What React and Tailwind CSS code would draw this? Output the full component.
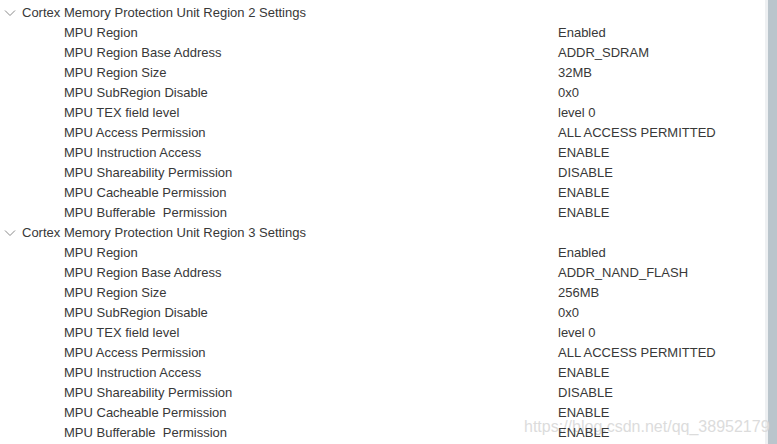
import React from "react";

const rows2 = [
  ["MPU Region", "Enabled"],
  ["MPU Region Base Address", "ADDR_SDRAM"],
  ["MPU Region Size", "32MB"],
  ["MPU SubRegion Disable", "0x0"],
  ["MPU TEX field level", "level 0"],
  ["MPU Access Permission", "ALL ACCESS PERMITTED"],
  ["MPU Instruction Access", "ENABLE"],
  ["MPU Shareability Permission", "DISABLE"],
  ["MPU Cacheable Permission", "ENABLE"],
  ["MPU Bufferable  Permission", "ENABLE"],
];
const rows3 = [
  ["MPU Region", "Enabled"],
  ["MPU Region Base Address", "ADDR_NAND_FLASH"],
  ["MPU Region Size", "256MB"],
  ["MPU SubRegion Disable", "0x0"],
  ["MPU TEX field level", "level 0"],
  ["MPU Access Permission", "ALL ACCESS PERMITTED"],
  ["MPU Instruction Access", "ENABLE"],
  ["MPU Shareability Permission", "DISABLE"],
  ["MPU Cacheable Permission", "ENABLE"],
  ["MPU Bufferable  Permission", "ENABLE"],
];

function Chevron() {
  return (
    <svg width="12" height="8" viewBox="0 0 12 8" className="ml-[4px] mr-[6px]">
      <path d="M1 1.5 L6 6.5 L11 1.5" fill="none" stroke="#8a8a8a" strokeWidth="1" />
    </svg>
  );
}

function Group({ title, rows }) {
  return (
    <>
      <div className="flex h-[20px] items-center">
        <Chevron />
        <span>{title}</span>
      </div>
      {rows.map(([k, v], i) => (
        <div key={i} className="flex h-[20px] items-center">
          <span className="w-[558px] shrink-0 pl-[64px] whitespace-pre">{k}</span>
          <span className="relative z-10">{v}</span>
        </div>
      ))}
    </>
  );
}

export default function App() {
  return (
    <div
      className="relative flex h-[444px] w-[777px] overflow-hidden bg-white text-[13px] text-[#383838]"
      style={{ fontFamily: '"Liberation Sans", Arial, sans-serif' }}
    >
      <div className="flex flex-1 flex-col pt-[3px]">
        <Group title="Cortex Memory Protection Unit Region 2 Settings" rows={rows2} />
        <Group title="Cortex Memory Protection Unit Region 3 Settings" rows={rows3} />
      </div>
      <div className="w-[3px] bg-[#eef0f2]" />
      <div className="w-[9px] bg-[#bac5cc]" />
      <div className="absolute left-[524px] top-[415px] z-0 text-[16px] text-[#dcdcdc]">
        https://blog.csdn.net/qq_38952179
      </div>
    </div>
  );
}
